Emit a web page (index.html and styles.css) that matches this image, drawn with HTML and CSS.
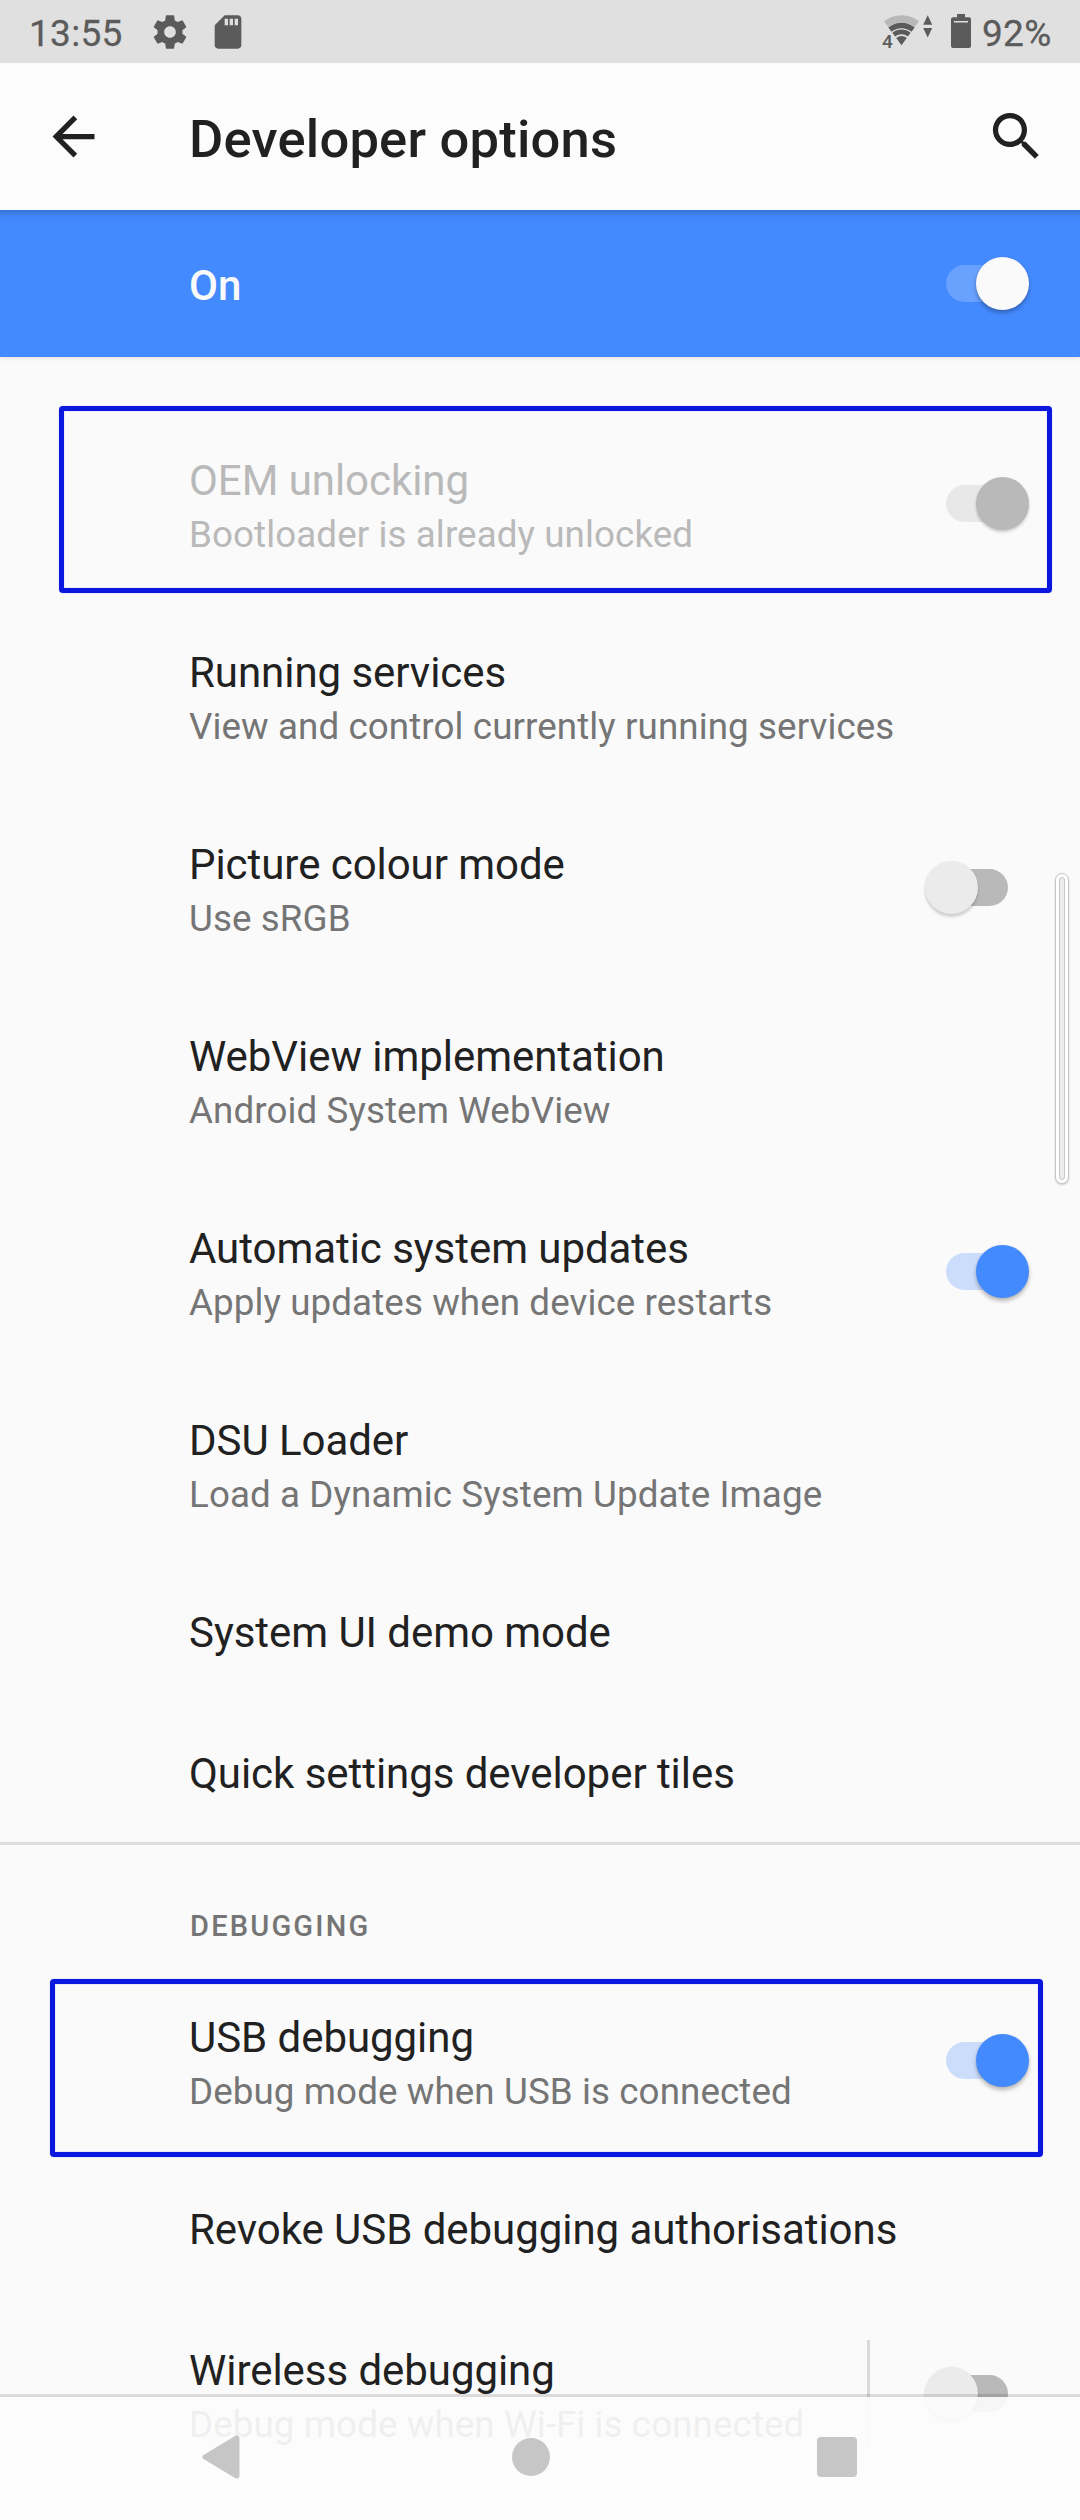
FILE: index.html
```html
<!DOCTYPE html>
<html lang="en">
<head>
<meta charset="utf-8">
<title>Developer options</title>
<link rel="stylesheet" href="styles.css">
</head>
<body>
<div class="screen">
  <header class="status">
    <span class="clock">13:55</span>
    <svg class="status-icon gear" viewBox="0 0 24 24"><path fill-rule="evenodd" d="M19.43 12.98c.04-.32.07-.64.07-.98s-.03-.66-.07-.98l2.11-1.65c.19-.15.24-.42.12-.64l-2-3.46c-.12-.22-.39-.3-.61-.22l-2.49 1c-.52-.4-1.08-.73-1.69-.98l-.38-2.65C14.46 2.18 14.25 2 14 2h-4c-.25 0-.46.18-.49.42l-.38 2.65c-.61.25-1.17.59-1.69.98l-2.49-1c-.23-.09-.49 0-.61.22l-2 3.46c-.13.22-.07.49.12.64l2.11 1.65c-.04.32-.07.65-.07.98s.03.66.07.98l-2.11 1.65c-.19.15-.24.42-.12.64l2 3.46c.12.22.39.3.61.22l2.49-1c.52.4 1.08.73 1.69.98l.38 2.65c.03.24.24.42.49.42h4c.25 0 .46-.18.49-.42l.38-2.65c.61-.25 1.17-.59 1.69-.98l2.49 1c.23.09.49 0 .61-.22l2-3.46c.12-.22.07-.49-.12-.64l-2.11-1.65zM12 15.5c-1.93 0-3.5-1.57-3.5-3.5s1.57-3.5 3.5-3.5 3.5 1.57 3.5 3.5-1.57 3.500-3.500 3.500z"/></svg>
    <svg class="status-icon sd" viewBox="0 0 24 24"><path d="M18 2h-8L4.02 8 4 20c0 1.100.9 2 2 2h12c1.100 0 2-.9 2-2V4c0-1.100-.9-2-2-2zm-6 6h-2V4h2v4zm3 0h-2V4h2v4zm3 0h-2V4h2v4z"/></svg>
    <svg class="wifi" viewBox="0 0 50 36">
      <path class="wifi-dim" d="M2 9.300a28 28 0 0 1 35 0l-4.300 5.700a21.500 21.500 0 0 0-26.400 0z"/>
      <path d="M6.300 15.400a21 21 0 0 1 26.400 0l-3.200 4.300a16 16 0 0 0-20 0zM10.400 20.800a14.500 14.500 0 0 1 18.200 0l-2.700 3.600a10.500 10.500 0 0 0-12.800 0zM14.200 26a8 8 0 0 1 10.600 0l-5.300 7.200z"/>
      <path d="M41.200 12.700l4.500-9.400 4.500 9.400zM41.200 16h9l-4.500 9.400z"/>
      <text x="0" y="35.500" class="wifi-gen">4</text>
    </svg>
    <svg class="battery" viewBox="0 0 20 34"><path fill-rule="evenodd" d="M6 0h8v3.300h4a2 2 0 0 1 2 2V32a2 2 0 0 1-2 2H2a2 2 0 0 1-2-2V5.300a2 2 0 0 1 2-2h4zM3 7v1.600h14V7z"/></svg>
    <span class="percent">92%</span>
  </header>

  <div class="toolbar">
    <svg class="icon" viewBox="0 0 24 24"><path d="M20 11H7.830l5.590-5.590L12 4l-8 8 8 8 1.410-1.410L7.830 13H20v-2z"/></svg>
    <h1 class="heading">Developer options</h1>
    <svg class="icon" viewBox="0 0 24 24"><path d="M15.500 14h-.79l-.28-.27A6.471 6.471 0 0 0 16 9.500 6.500 6.500 0 1 0 9.500 16c1.610 0 3.090-.59 4.230-1.570l.27.28v.79l5 4.990L20.490 19l-4.990-5zm-6 0C7.010 14 5 11.990 5 9.500S7.010 5 9.500 5 14 7.010 14 9.500 11.990 14 9.500 14z"/></svg>
  </div>

  <div class="master">
    <span class="master-label">On</span>
    <span class="switch on inverse"><i class="track"></i><i class="knob"></i></span>
  </div>

  <main class="list">
    <div class="row disabled">
      <div class="text"><div class="title">OEM unlocking</div><div class="sub">Bootloader is already unlocked</div></div>
      <span class="switch on"><i class="track"></i><i class="knob"></i></span>
      <div class="mark mark-oem"></div>
    </div>
    <div class="row">
      <div class="text"><div class="title">Running services</div><div class="sub">View and control currently running services</div></div>
    </div>
    <div class="row">
      <div class="text"><div class="title">Picture colour mode</div><div class="sub">Use sRGB</div></div>
      <span class="switch off"><i class="track"></i><i class="knob"></i></span>
    </div>
    <div class="row">
      <div class="text"><div class="title">WebView implementation</div><div class="sub">Android System WebView</div></div>
    </div>
    <div class="row">
      <div class="text"><div class="title">Automatic system updates</div><div class="sub">Apply updates when device restarts</div></div>
      <span class="switch on"><i class="track"></i><i class="knob"></i></span>
    </div>
    <div class="row">
      <div class="text"><div class="title">DSU Loader</div><div class="sub">Load a Dynamic System Update Image</div></div>
    </div>
    <div class="row single">
      <div class="text"><div class="title">System UI demo mode</div></div>
    </div>
    <div class="row single">
      <div class="text"><div class="title">Quick settings developer tiles</div></div>
    </div>
    <h2 class="category">DEBUGGING</h2>
    <div class="row">
      <div class="text"><div class="title">USB debugging</div><div class="sub">Debug mode when USB is connected</div></div>
      <span class="switch on"><i class="track"></i><i class="knob"></i></span>
      <div class="mark mark-usb"></div>
    </div>
    <div class="row single">
      <div class="text"><div class="title">Revoke USB debugging authorisations</div></div>
    </div>
    <div class="row">
      <div class="text"><div class="title">Wireless debugging</div><div class="sub">Debug mode when Wi-Fi is connected</div></div>
      <i class="separator"></i>
      <span class="switch off"><i class="track"></i><i class="knob"></i></span>
    </div>
  </main>

  <div class="scrollbar"><i class="scrollbar-core"></i></div>

  <nav class="navbar">
    <svg class="nav-back" viewBox="0 0 38 44"><path d="M2 19.800 33 .9Q37.500-.5 37.500 4v36q0 4.500-4.500 3.100L2 24.200q-3.500-2.200 0-4.400z"/></svg>
    <i class="nav-home"></i>
    <i class="nav-recent"></i>
  </nav>
</div>
</body>
</html>
```
FILE: styles.css
```css
* { box-sizing: border-box; }
body {
  margin: 0;
  font-family: Roboto, "Liberation Sans", sans-serif;
  color: #212121;
  background: #fafafa;
}
svg { display: block; flex: none; }
.screen {
  position: relative;
  width: 1080px;
  height: 2520px;
  overflow: hidden;
  background: #fafafa;
}

/* Status bar */
.status {
  display: flex;
  height: 63px;
  padding: 0 29px 0 29px;
  background: #e0e0e0;
  color: #5b5b5b;
  fill: #5b5b5b;
  font-size: 37px;
  font-weight: 400;
  letter-spacing: .3px;
  line-height: 67px;
  -webkit-text-stroke: .3px #5b5b5b;
}
.clock { width: 121px; }
.status-icon { width: 40px; height: 40px; margin-top: 12px; }
.sd { margin-left: 18px; }
.wifi { width: 50px; height: 36px; margin: 12px 0 0 auto; overflow: visible; }
.wifi-dim { fill: #b8b8b8; }
.wifi-gen { font-size: 19px; font-weight: 500; }
.battery { width: 20px; height: 34px; margin: 14px 11px 0 19px; }
.percent { width: 69px; white-space: nowrap; }

/* App bar */
.toolbar {
  display: flex;
  align-items: center;
  height: 147px;
  padding: 0 32px 0 42px;
  background: #fcfcfc;
}
.icon { width: 63px; height: 63px; fill: #212121; }
.heading {
  flex: 1;
  margin: 4px 0 0 84px;
  font-size: 52.500px;
  font-weight: 500;
  letter-spacing: .220px;
  line-height: 62px;
}

.master {
  display: flex;
  align-items: center;
  justify-content: space-between;
  height: 147px;
  padding-left: 189px;
  background: #448aff;
  color: #fafafa;
  box-shadow: inset 0 9px 9px -6px rgba(0, 0, 0, .2), 0 2px 3px rgba(0, 0, 0, .08);
}
.master-label { font-size: 42px; font-weight: 500; line-height: 50px; padding-top: 5px; }

/* Preference rows */
.list { padding-top: 50px; }
.row {
  position: relative;
  display: flex;
  height: 192px;
  padding-left: 189px;
}
.single { height: 141px; }
.text { flex: 1; padding-top: 46px; white-space: nowrap; }
.title { font-size: 42px; line-height: 56px; letter-spacing: -.050px; }
.sub { font-size: 36.750px; line-height: 51px; letter-spacing: .090px; color: #757575; }
.disabled .title, .disabled .sub { color: #b9b9b9; }
.category {
  height: 122px;
  margin: 1px 0 0;
  padding: 61px 0 0 190px;
  border-top: 3px solid #dadce0;
  color: #757575;
  font-size: 29px;
  font-weight: 500;
  letter-spacing: 2.200px;
  line-height: 40px;
}
.separator { width: 3px; height: 107px; margin: 43px 55px 0 0; background: #dadada; }

/* Switches */
.switch {
  display: grid;
  align-items: center;
  align-self: center;
  width: 83px;
  height: 53px;
  margin-right: 51px;
}
.track, .knob { grid-area: 1 / 1; }
.track { width: 75px; height: 37px; border-radius: 19px; background: #ccddfb; }
.knob {
  justify-self: end;
  width: 53px;
  height: 53px;
  border-radius: 50%;
  background: #448aff;
  box-shadow: 0 3px 4px rgba(0, 0, 0, .27), 0 0 2px rgba(0, 0, 0, .08);
}
.inverse .track { background: #69a1ff; }
.inverse .knob { background: #fafafa; }
.disabled .track { background: #e8e8e8; }
.disabled .knob { background: #b9b9b9; box-shadow: 0 2px 3px rgba(0, 0, 0, .2); }
.off { margin-right: 72px; }
.off .track { justify-self: end; background: #b9b9b9; }
.off .knob { justify-self: start; background: #ebebeb; box-shadow: 0 3px 3px rgba(0, 0, 0, .17), 0 0 2px rgba(0, 0, 0, .05); }

/* Annotation frames over the rows */
.mark {
  position: absolute;
  border: 5px solid #0b17df;
  border-radius: 4px;
  box-shadow: 0 0 1px rgba(11, 23, 223, .6), inset 0 0 1px rgba(11, 23, 223, .6);
}
.mark-oem { left: 59px; top: -1px; width: 993px; height: 187px; }
.mark-usb { left: 50px; top: 15px; width: 993px; height: 178px; }

.scrollbar {
  position: absolute;
  left: 1055px;
  top: 873px;
  width: 14px;
  height: 311px;
  padding: 3px;
  border: 1px solid #c6c6c6;
  border-radius: 7px;
  background: #fff;
  box-shadow: 0 1px 2px rgba(0, 0, 0, .2);
}
.scrollbar-core {
  display: block;
  height: 100%;
  border: 1px solid #c6c6c6;
  border-radius: 3px;
  background: #ececec;
}

/* Translucent system navigation over the list */
.navbar {
  position: absolute;
  left: 0;
  bottom: 0;
  display: flex;
  align-items: center;
  width: 1080px;
  height: 126px;
  padding: 0 0 3px 202px;
  border-top: 3px solid rgba(0, 0, 0, .12);
  background: rgba(252, 252, 252, .91) padding-box;
}
.nav-back { width: 38px; height: 44px; fill: #c6c6c6; }
.nav-home { width: 38px; height: 38px; margin-left: 272px; border-radius: 50%; background: #c6c6c6; }
.nav-recent { width: 40px; height: 40px; margin-left: 267px; border-radius: 4px; background: #c6c6c6; }
```
